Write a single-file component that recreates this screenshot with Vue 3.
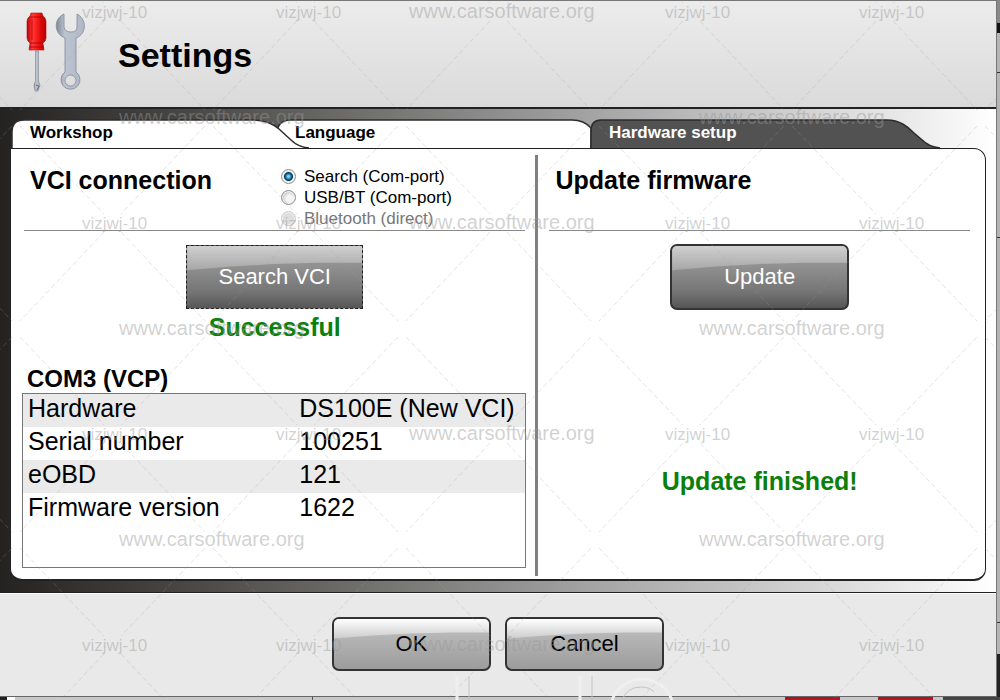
<template>
  <div class="screen">
    <div class="window">
      <header class="header">
        <svg class="tools" width="60" height="84" viewBox="0 0 60 84" aria-hidden="true">
          <defs>
            <linearGradient id="handle">
              <stop offset="0" stop-color="#b80000" />
              <stop offset="0.3" stop-color="#ff3a3a" />
              <stop offset="0.6" stop-color="#f01414" />
              <stop offset="1" stop-color="#b00000" />
            </linearGradient>
            <linearGradient id="steel">
              <stop offset="0" stop-color="#808894" />
              <stop offset="0.3" stop-color="#bcc4d0" />
              <stop offset="1" stop-color="#b0b8c7" />
            </linearGradient>
          </defs>
          <path d="M9.500 39 H12.500 V69 L14 73 L12 79 H9 L8 73 L9.500 69 Z" fill="url(#steel)" stroke="#7d838c" stroke-width="0.600" />
          <path d="M10 73 L13 74 L11 78" fill="none" stroke="#666c75" />
          <path d="M5 1 H16 L17 4 Q20 6 20 9 V26 Q20 29 17 31 L18 38 H3 L4 31 Q1 29 1 26 V9 Q1 6 4 4 Z" fill="url(#handle)" stroke="#c40808" stroke-width="0.600" />
          <path d="M4 5 H17 M4 31 H17 M3 35 H18" stroke="#a30000" stroke-width="0.800" />
          <path d="M6 7 V28 M15 7 V28" stroke="#d00808" />
          <path
            d="M38 2 C27 7 28 22 39 26 V60 A9.500 9.500 0 1 0 50 60 V26 C61 22 61 7 51 2 V15 Q51 20 45 20 Q39 20 38 15 Z M44.500 63 A5.500 5.500 0 1 1 44.500 74 A5.500 5.500 0 1 1 44.500 63 Z"
            fill="url(#steel)" fill-rule="evenodd" stroke="#828997" stroke-width="0.800"
          />
        </svg>
        <h1>Settings</h1>
      </header>

      <main class="main">
        <nav class="tabs">
          <svg class="tab-shapes" viewBox="0 0 976 29" preserveAspectRatio="none" aria-hidden="true">
            <g fill="#fff" stroke="#2c2c2c" stroke-width="1.500">
              <path d="M267 29 V15 Q267 1 281 1 H562 Q574 1 581 9 V29" />
              <path d="M2 29 V13 Q2 1 14 1 H243 C256 1 263 5 269 10 L281 21 Q288 28 299 29" />
              <path d="M581 29 V12 Q581 1 591 1 H877 C890 1 898 8 904 14 L911 20 Q919 28 930 29" fill="#525252" />
            </g>
          </svg>
          <button
            v-for="tab in tabs"
            :key="tab.id"
            type="button"
            class="tab"
            :class="[tab.id, { active: tab.id === activeTab }]"
            @click="activeTab = tab.id"
          >
            {{ tab.label }}
          </button>
        </nav>

        <div class="panel">
          <section class="column vci">
            <div class="column-head">
              <h2>VCI connection</h2>
              <div class="radios">
                <label v-for="port in ports" :key="port.value" :class="{ disabled: port.disabled }">
                  <input v-model="selectedPort" type="radio" name="port" :value="port.value" :disabled="port.disabled" />
                  {{ port.label }}
                </label>
              </div>
            </div>
            <button type="button" class="btn dark focused">Search VCI</button>
            <p class="status">Successful</p>
            <h3>COM3 (VCP)</h3>
            <div class="table-box">
              <table>
                <tbody>
                  <tr v-for="row in deviceInfo" :key="row.name">
                    <th scope="row">{{ row.name }}</th>
                    <td>{{ row.value }}</td>
                  </tr>
                </tbody>
              </table>
            </div>
          </section>

          <div class="divider"></div>

          <section class="column firmware">
            <div class="column-head">
              <h2>Update firmware</h2>
            </div>
            <button type="button" class="btn dark">Update</button>
            <p class="status finished">Update finished!</p>
          </section>
        </div>
      </main>

      <footer class="footer">
        <button type="button" class="btn light">OK</button>
        <button type="button" class="btn light">Cancel</button>
      </footer>
    </div>

    <svg class="watermark" aria-hidden="true">
      <defs>
        <pattern id="net" x="16" y="12" width="193" height="211" patternUnits="userSpaceOnUse">
          <path
            d="M88 9 L4 98 M105 9 L189 98 M4 114 L88 202 M189 114 L105 202"
            fill="none" stroke="#999" stroke-opacity="0.280" stroke-dasharray="5 3"
          />
        </pattern>
      </defs>
      <rect width="100%" height="100%" fill="url(#net)" />
      <text
        v-for="(mark, index) in marks"
        :key="index"
        :x="mark.x"
        :y="mark.y"
        :class="mark.site ? 'site' : 'user'"
      >{{ mark.site ? 'www.carsoftware.org' : 'vizjwj-10' }}</text>
      <g fill="none" stroke-width="1">
        <path d="M457 676 V700 M580 676 V700 M672 700 A32 32 0 0 0 612 700" stroke="#efefef" stroke-width="3" />
        <path d="M469 676 V700 M592 676 V700 M622 700 Q627 687 641 687 Q650 687 654 692" stroke="#c4c4c4" />
      </g>
    </svg>
  </div>
</template>

<script setup>
import { ref } from 'vue'

const tabs = [
  { id: 'workshop', label: 'Workshop' },
  { id: 'language', label: 'Language' },
  { id: 'hardware', label: 'Hardware setup' }
]
const activeTab = ref('hardware')

const ports = [
  { value: 'search', label: 'Search (Com-port)' },
  { value: 'usb', label: 'USB/BT (Com-port)' },
  { value: 'bluetooth', label: 'Bluetooth (direct)', disabled: true }
]
const selectedPort = ref('search')

const deviceInfo = [
  { name: 'Hardware', value: 'DS100E (New VCI)' },
  { name: 'Serial number', value: '100251' },
  { name: 'eOBD', value: '121' },
  { name: 'Firmware version', value: '1622' }
]

const marks = []
for (let row = 0; row < 4; row++) {
  const y = 18 + row * 211
  marks.push({ x: 409, y, site: true })
  for (const x of [82, 276, 665, 859]) marks.push({ x, y })
  if (row < 3) {
    marks.push({ x: 119, y: y + 106, site: true })
    marks.push({ x: 699, y: y + 106, site: true })
  }
}
</script>

<style>
body {
  margin: 0;
}
</style>

<style scoped>
* {
  box-sizing: border-box;
}

.screen {
  position: relative;
  display: flex;
  min-height: 100vh;
  padding: 0 3px 3px 0;
  font-family: "Liberation Sans", Arial, sans-serif;
  color: #000;
  background:
    linear-gradient(90deg, #222 7px, #fff 7px 15px, #c8c8c8 15px 312px, #555 312px 313px, #c8c8c8 313px 785px, #b5121f 785px 840px, #c8c8c8 840px 878px, #b5121f 878px 933px, #c8c8c8 933px 943px, #444 943px) bottom / 100% 3px no-repeat,
    linear-gradient(#888 23px, #111 23px 33px, #b5b5b5 33px 72px, #333 72px 73px, #b5b5b5 73px 237px, #333 237px 238px, #b5b5b5 238px 622px, #333 622px 623px, #b5b5b5 623px 654px, #222 654px);
}

.window {
  flex: 1;
  display: flex;
  flex-direction: column;
  border-top: 1px solid #777;
  border-right: 1px solid #777;
  border-bottom: 1px solid #666;
}

.header {
  display: flex;
  align-items: flex-start;
  gap: 32px;
  height: 108px;
  padding: 11px 26px;
  border-bottom: 2px solid #222;
  background: linear-gradient(#ececec, #dadada);
}

h1,
h2,
h3,
p {
  margin: 0;
}

h1 {
  font-size: 34px;
  line-height: 40px;
  padding-top: 23px;
}

.main {
  flex: 1;
  display: flex;
  flex-direction: column;
  padding: 10px 10px 11px;
  border-bottom: 1px solid #222;
  background: linear-gradient(90deg, #242321, #4b4a48 20%, #a5a5a5 60%, #d0d0d0 80%, #fff);
}

.tabs {
  position: relative;
  display: grid;
  grid-template-columns: 267fr 314fr 395fr;
  height: 29px;
}

.tab-shapes {
  position: absolute;
  inset: 0;
  width: 100%;
  height: 29px;
}

.tab {
  position: relative;
  padding: 0 18px 2px;
  border: none;
  background: none;
  font: bold 17px/20px "Liberation Sans", Arial, sans-serif;
  color: #000;
  text-align: left;
  cursor: pointer;
}

.tab.workshop {
  padding-left: 20px;
}

.tab.active {
  color: #fff;
}

.panel {
  flex: 1;
  display: grid;
  grid-template-columns: 525fr 3px 447fr;
  border: 1px solid #222;
  border-bottom-width: 2px;
  border-radius: 0 12px 12px 12px;
  background: #fff;
}

.divider {
  margin: 6px 0 3px;
  background: #808080;
}

.column {
  display: flex;
  flex-direction: column;
  align-items: center;
  padding: 17px 9px 11px 12px;
}

.firmware {
  padding: 17px 14px 11px 10px;
}

.column-head {
  display: flex;
  align-self: stretch;
  align-items: flex-start;
  height: 65px;
  margin: 0 1px 13px;
  border-bottom: 1px solid #888;
}

.column-head h2 {
  width: 257px;
  padding-left: 6px;
  font-size: 25px;
  line-height: 28px;
}

.radios {
  display: flex;
  flex-direction: column;
}

.radios label {
  display: flex;
  align-items: center;
  gap: 8px;
  height: 21px;
  font-size: 17px;
  white-space: nowrap;
}

.radios .disabled {
  color: #777;
}

.radios input {
  appearance: none;
  width: 15px;
  height: 15px;
  margin: 0;
  border: 1px solid #8e8f8f;
  border-radius: 50%;
  background: radial-gradient(circle at 60% 60%, #f4f4f4 30%, #c4c8cc 70%);
  box-shadow: inset 0 0 0 1px #f4f4f4;
}

.radios input:checked {
  background: radial-gradient(circle at 50% 50%, #6fd0f4 0 1px, #12648f 3px, #0b3550 4px, #e4e8ea 5px);
}

.radios input:disabled {
  border-color: #ccc;
  background: #ddd;
}

.btn {
  position: relative;
  z-index: 0;
  overflow: hidden;
  padding: 0;
  border: 2px solid #333;
  border-radius: 7px;
  font: 22px/26px "Liberation Sans", Arial, sans-serif;
  cursor: pointer;
}

/* glossy upper part with a slightly bent lower edge */
.btn::before {
  content: "";
  position: absolute;
  inset: 0;
  z-index: -1;
  clip-path: polygon(0 0, 100% 0, 100% 27%, 75% 27%, 50% 29%, 25% 33%, 0 39%);
}

.btn.dark {
  width: 179px;
  height: 66px;
  color: #fff;
  background: linear-gradient(#a4a4a4, #8f8f8f 35%, #747474 75%, #555);
}

.btn.dark::before {
  background: linear-gradient(#d0d0d0, #a6a6a6 40%);
}

.btn.focused {
  width: 177px;
  height: 64px;
  margin: 1px 0;
  border: 1px dashed #222;
  border-radius: 0;
}

.btn.light {
  width: 159px;
  height: 54px;
  color: #000;
  background: linear-gradient(#c8c8c8, #b5b5b5 35%, #9c9c9c);
}

.btn.light::before {
  background: linear-gradient(#fff, #c8c8c8 42%);
}

.status {
  margin-top: 3px;
  font-size: 25px;
  line-height: 28px;
  font-weight: bold;
  color: #0a800a;
}

.status.finished {
  margin-top: 157px;
}

h3 {
  align-self: stretch;
  margin-top: 24px;
  padding-left: 4px;
  font-size: 24px;
  line-height: 28px;
}

.table-box {
  flex: 1;
  align-self: stretch;
  margin-left: -1px;
  border: 1px solid #777;
}

table {
  width: 100%;
  border-collapse: collapse;
  table-layout: fixed;
}

th,
td {
  height: 33px;
  padding: 0 0 0 5px;
  font-size: 25px;
  line-height: 28px;
  font-weight: normal;
  text-align: left;
  vertical-align: top;
  white-space: nowrap;
}

th {
  width: 54%;
}

tr:nth-child(odd) {
  background: #eaeaea;
}

.footer {
  display: flex;
  justify-content: center;
  gap: 14px;
  padding: 23px 0 25px;
  border-top: 1px solid #fff;
  background: #e9e9e9;
}

.watermark {
  position: absolute;
  inset: 0;
  width: 100%;
  height: 100%;
  pointer-events: none;
}

.watermark text {
  fill: #999;
  fill-opacity: 0.45;
}

.watermark .site {
  font-size: 20px;
}

.watermark .user {
  font-size: 17px;
}
</style>
